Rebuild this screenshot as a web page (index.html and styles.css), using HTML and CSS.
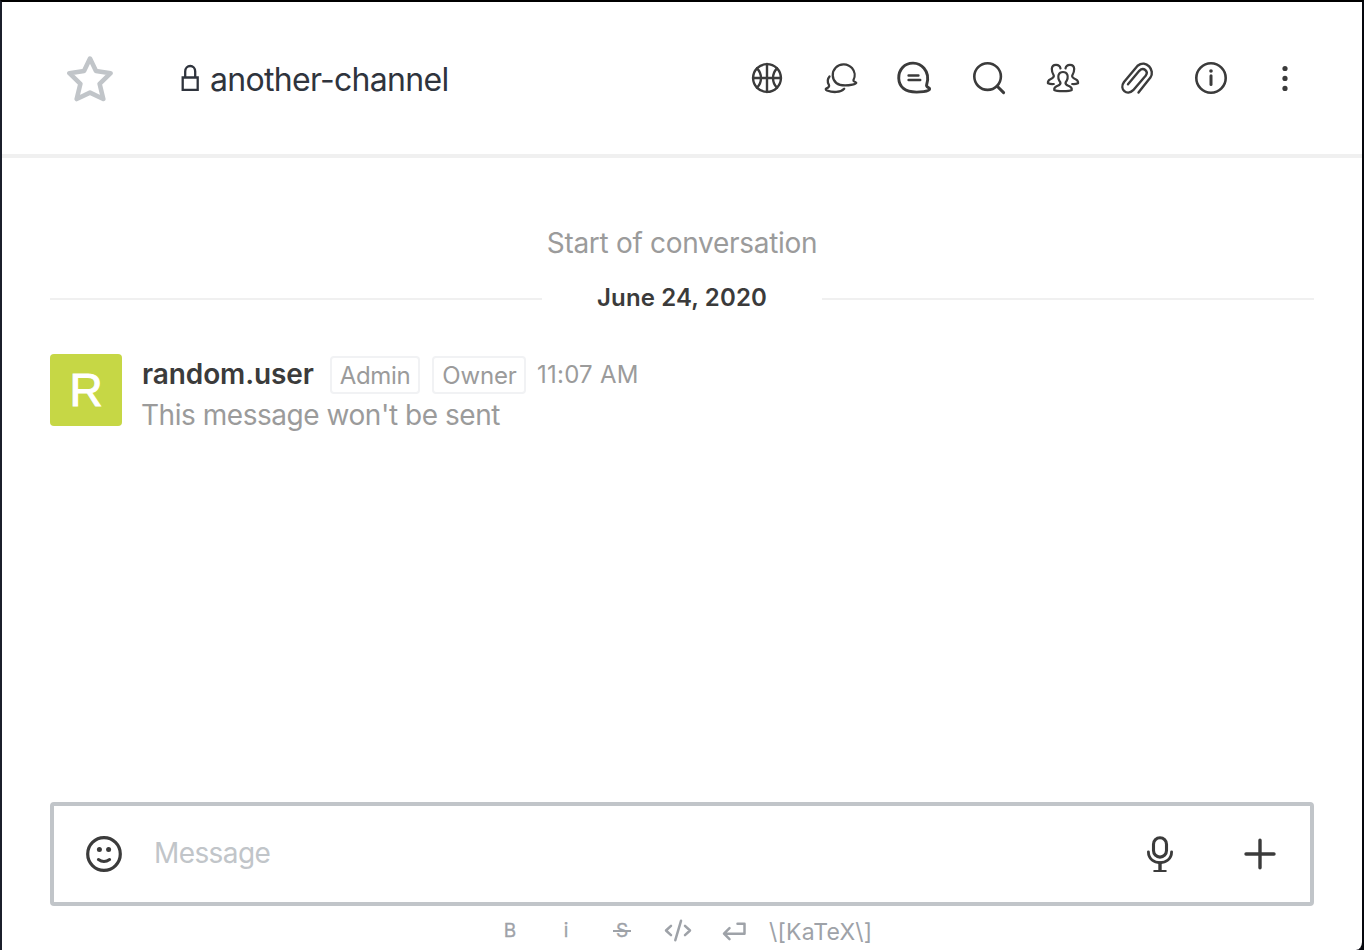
FILE: index.html
```html
<!DOCTYPE html>
<html lang="en">
<head>
<meta charset="utf-8">
<title>another-channel</title>
<link rel="stylesheet" href="styles.css">
</head>
<body>
<div class="window">
  <header class="header">
    <svg class="star" viewBox="0 0 46 46"><path d="M23 2.6L29 15L43.6 17.2L32.6 27.8L36.3 43L23 36.6L9.7 43L13.4 27.8L2.4 17.2L17 15Z"/></svg>
    <svg class="lock" viewBox="0 0 20 28"><path d="M2.7 13.5H17.7V25.8H2.7ZM5.2 13.5V7.4A5 5.4 0 0 1 15.2 7.4V13.5"/></svg>
    <h1 class="title">another-channel</h1>
    <nav class="actions">
      <svg class="icon" viewBox="0 0 40 40"><g stroke-width="2.4"><circle cx="20" cy="20" r="13.9"/><path d="M20 6V34M6 20H34M10 10.3C15.3 15.5 15.3 24.5 10 29.7M30 10.3C24.7 15.5 24.7 24.5 30 29.7"/></g></svg>
      <svg class="icon" viewBox="0 0 40 40"><g stroke-width="2.3"><path d="M32.4 22.2C34.5 18.4 33.9 13.4 31 10.1C26.9 5.3 19 5 14.8 9.5C10.5 13.9 10.8 21.3 15.3 25C19.5 28.3 27 27.5 31.5 26.6C33.4 26.2 35.1 25.7 35.3 24.8C35.4 23.9 32.1 24 32.4 22.2Z"/><path d="M8.5 18.5C6.2 21.3 6.2 24 7.9 26.8C8.8 28.6 7.2 29.7 5.5 30.3C4.3 30.8 4.7 31.8 6 32.5C11.5 34.6 19.5 34.8 23.2 30.8"/></g></svg>
      <svg class="icon" viewBox="0 0 40 40"><g transform="translate(-.8 0)"><path stroke-width="2.9" d="M32.5 26.5C34.2 21 33.6 14.6 29.8 10.2C24.2 3.7 14 3.5 8.6 9.3C2.9 15.3 3.3 25.4 9.2 30.4C14.5 35 23 34.4 29.5 33.6C32.8 33.2 35.3 32.3 35.5 30.8C35.6 29.3 31.4 29.8 32.5 26.5Z"/><path stroke-width="2.5" d="M14.4 17.4H24.2M14.4 22H26"/></g></svg>
      <svg class="icon" viewBox="0 0 40 40"><circle stroke-width="2.6" cx="18.6" cy="18.6" r="13.3"/><path stroke-width="3" d="M28.2 28.2L34.6 34.6"/></svg>
      <svg class="icon" viewBox="0 0 40 40"><g stroke-width="2.2"><path d="M17.4 24.5C15.5 21.8 14.9 18.7 15.7 16.6C17.2 13.1 22.8 13.1 24.3 16.6C25.1 18.7 24.5 21.8 22.6 24.5C22 26.8 24 27.2 26 28C28.4 29 29 30.5 28.7 32C26.5 33.5 13.5 33.5 11.3 32C11 30.5 11.6 29 14 28C16 27.2 18 26.8 17.4 24.5Z"/><path d="M17.5 10.5C16.6 5.5 9.2 5.6 8.8 10.8C8.7 13.7 9.5 15.5 10.8 17.6C11.3 19.8 9.3 20.6 7 21.5C5.2 22.4 4.8 23.7 4.9 25.2Q7.5 26.3 10.8 26"/><path d="M22.5 10.5C23.4 5.5 30.8 5.6 31.2 10.8C31.3 13.7 30.5 15.5 29.2 17.6C28.7 19.8 30.7 20.6 33 21.5C34.8 22.4 35.2 23.7 35.1 25.2Q32.5 26.3 29.2 26"/></g></svg>
      <svg class="icon" viewBox="0 0 40 40"><path stroke-width="2.4" d="M21.5 34.5L33.4 19.6C38.5 12.5 29.2 .7 20.6 7.8L7 24C1.8 31.2 10 38.3 16.2 32.2L28.6 17.8C32 13.2 26.4 8.5 22.3 12.8L11 26.3"/></svg>
      <svg class="icon" viewBox="0 0 40 40"><circle stroke-width="2.6" cx="20" cy="20" r="14.7"/><path stroke-width="3" d="M20 17.8V26.6"/><circle class="solid" cx="20" cy="13" r="1.8"/></svg>
      <svg class="icon" viewBox="0 0 40 40"><g class="solid"><circle cx="20" cy="10.5" r="2.6"/><circle cx="20" cy="20.4" r="2.6"/><circle cx="20" cy="30.4" r="2.6"/></g></svg>
    </nav>
  </header>
  <main class="messages">
    <p class="start">Start of conversation</p>
    <div class="divider"><span class="date">June 24, 2020</span></div>
    <article class="message">
      <div class="avatar">R</div>
      <div class="content">
        <div class="meta"><b class="user">random.user</b><span class="tag admin">Admin</span><span class="tag owner">Owner</span><time class="time">11:07 AM</time></div>
        <p class="body">This message won't be sent</p>
      </div>
    </article>
  </main>
  <footer class="composer">
    <div class="box">
      <svg class="icon" viewBox="0 0 40 40"><circle stroke-width="3.2" cx="20" cy="20" r="16.3"/><circle class="solid" cx="15.4" cy="15.4" r="2.5"/><circle class="solid" cx="24.6" cy="15.4" r="2.5"/><path stroke-width="3" d="M14.4 25.6Q20 29.4 25.6 25.6"/></svg>
      <input class="field" placeholder="Message">
      <svg class="icon mic" viewBox="0 0 40 40"><rect stroke-width="3.1" x="13.5" y="3.7" width="13" height="19.4" rx="6.5"/><path stroke-width="2.8" d="M8.4 17.8C8.4 32.4 31.6 32.4 31.6 17.8"/><path stroke-width="3.4" d="M20 29V36"/><path stroke-width="2.2" d="M14.3 37H25.7"/></svg>
      <svg class="icon" viewBox="0 0 40 40"><path stroke-width="3.4" d="M20 6.3V33.7M6 20H34"/></svg>
    </div>
    <div class="formats">
      <span class="format">B</span>
      <span class="format">i</span>
      <span class="format strike">S</span>
      <svg class="format" viewBox="0 0 28 28"><path d="M7 8.8L2 13.5L7 18.2M21 8.8L26 13.5L21 18.2M17 3.8L11.3 23.2"/></svg>
      <svg class="format" viewBox="0 0 28 28"><path d="M17.5 6.7H24.5V16.7H4.5M9.5 11.2L4 16.7L9.5 22.2"/></svg>
      <span class="katex">\[KaTeX\]</span>
    </div>
  </footer>
</div>
</body>
</html>
```
FILE: styles.css
```css
* { box-sizing: border-box; }
body { margin: 0; background: #05070d; font-family: Inter, "Liberation Sans", sans-serif; }
h1, p { margin: 0; font-weight: 400; }
.window { display: flex; flex-direction: column; height: 950px; background: #fff; border-top: 2px solid #000; border-left: 2px solid #1b1f2b; border-right: 2px solid #05070d; border-bottom-right-radius: 8px; overflow: hidden; }
.header { display: flex; align-items: center; flex: none; height: 156px; padding: 0 57px 4px 65px; border-bottom: 4px solid #f0f0f0; }
.star { width: 46px; height: 46px; fill: none; stroke: #c1c5c9; stroke-width: 4.6; stroke-linejoin: round; margin-top: 5px; }
.lock { width: 20px; height: 28px; margin: 4px 10px 0 67px; fill: none; stroke: #2f343d; stroke-width: 2.3; }
.title { font-size: 32px; line-height: 40px; color: #2f343d; letter-spacing: -.7px; margin-top: 7px; white-space: nowrap; }
.actions { display: flex; gap: 34px; margin: 4px 0 0 auto; }
.icon { flex: none; width: 40px; height: 40px; fill: none; stroke: #3b3b3b; stroke-linecap: round; stroke-linejoin: round; }
.solid { fill: #3b3b3b; stroke: none; }
.messages { flex: 1; padding: 65px 48px 0; }
.start { text-align: center; font-size: 28px; line-height: 40px; letter-spacing: -.3px; color: #9b9b9b; }
.divider { display: flex; align-items: center; height: 40px; margin-top: 15px; }
.divider::before, .divider::after { content: ""; flex: 1; height: 2px; background: #f0f0f0; position: relative; top: 1px; }
.date { width: 280px; text-align: center; font-size: 24px; font-weight: 600; line-height: 40px; letter-spacing: .15px; color: #3b3b3b; }
.message { display: flex; gap: 20px; margin-top: 36px; }
.avatar { width: 72px; height: 72px; border-radius: 4px; background: #c6d745; color: #fff; font: 46px/72px "Liberation Sans", sans-serif; text-align: center; -webkit-text-stroke: 1px #fff; }
.meta { display: flex; align-items: flex-start; height: 40px; padding-top: 2px; white-space: nowrap; }
.user { width: 188px; font-size: 28px; line-height: 36px; font-weight: 600; letter-spacing: -.1px; color: #3b3b3b; }
.tag { height: 38px; margin-right: 12px; border: 2px solid #f1f2f4; border-radius: 4px; text-align: center; font-size: 24px; line-height: 36px; color: #9b9b9b; }
.admin { width: 90px; letter-spacing: -.35px; }
.owner { width: 94px; padding-left: 1px; letter-spacing: -.15px; }
.time { margin-left: -1px; font-size: 24px; line-height: 37px; letter-spacing: .25px; color: #9b9b9b; }
.body { margin-left: -1px; padding-top: 1px; font-size: 28px; line-height: 40px; letter-spacing: -.46px; color: #9b9b9b; }
.composer { flex: none; height: 148px; padding: 0 48px; }
.box { display: flex; align-items: center; height: 104px; padding: 0 30px; border: 4px solid #c1c5c9; border-radius: 4px; }
.field { flex: 1; min-width: 0; margin: 0 0 2px 30px; padding: 0; border: 0; outline: 0; font: 28px/36px Inter, sans-serif; letter-spacing: -.6px; color: #2f343d; }
.field::placeholder { color: #c1c5c9; opacity: 1; }
.mic { margin-right: 60px; }
.formats { display: flex; align-items: flex-start; gap: 28px; height: 44px; padding: 11px 0 0 446px; color: #9ea2a8; font-size: 19px; line-height: 28px; }
.format { flex: none; width: 28px; height: 28px; text-align: center; fill: none; stroke: #9ea2a8; stroke-width: 2.5; stroke-linecap: round; stroke-linejoin: round; -webkit-text-stroke: .3px #9ea2a8; }
.strike { background: linear-gradient(#9ea2a8, #9ea2a8) center 13px / 18px 2px no-repeat; }
.katex { margin-left: -7px; font-size: 23px; line-height: 31px; letter-spacing: .2px; white-space: nowrap; }
```
